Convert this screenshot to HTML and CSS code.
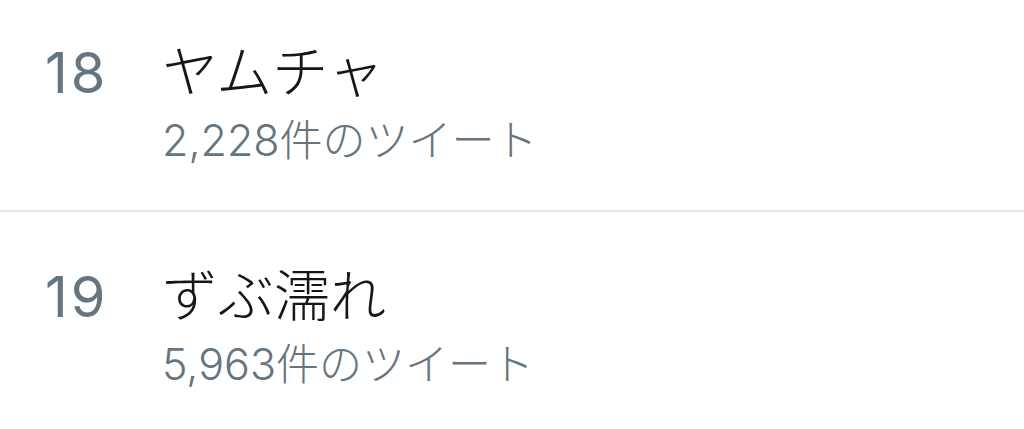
FILE: index.html
```html
<!DOCTYPE html>
<html lang="ja">
<head>
  <meta charset="UTF-8">
  <title>トレンド</title>
  <link rel="stylesheet" href="styles.css">
</head>
<body>
  <ol class="trends">
    <li class="trend">
      <span class="rank">18</span>
      <div class="info">
        <div class="name">ヤムチャ</div>
        <div class="count">2,228<span class="unit">件のツイート</span></div>
      </div>
    </li>
    <li class="trend">
      <span class="rank">19</span>
      <div class="info">
        <div class="name">ずぶ濡れ</div>
        <div class="count">5,963<span class="unit">件のツイート</span></div>
      </div>
    </li>
  </ol>
</body>
</html>
```

FILE: styles.css
```css
body {
  margin: 0;
  background: #fff;
  font-family: Inter, "Noto Sans CJK JP", sans-serif;
  overflow: hidden;
}
.trends {
  list-style: none;
  margin: -12px 0 0 0;
  padding: 0;
}
.trend {
  display: flex;
  align-items: flex-start;
  box-sizing: border-box;
  height: 224px;
  border-bottom: 2px solid #e6e6ea;
}
.rank {
  width: 117px;
  margin-top: 57px;
  padding-left: 45px;
  font-size: 56px;
  line-height: 56px;
  letter-spacing: 3px;
  color: #66757f;
}
.info {
  margin-top: 48px;
}
.name {
  font-family: "Noto Sans CJK JP", sans-serif;
  font-size: 56px;
  font-weight: 300;
  line-height: 64px;
  color: #14171a;
}
.count {
  margin-top: 12px;
  font-size: 43px;
  font-weight: 300;
  line-height: 50px;
  color: #66757f;
}
.count .unit {
  font-family: "Noto Sans CJK JP", sans-serif;
}
```
